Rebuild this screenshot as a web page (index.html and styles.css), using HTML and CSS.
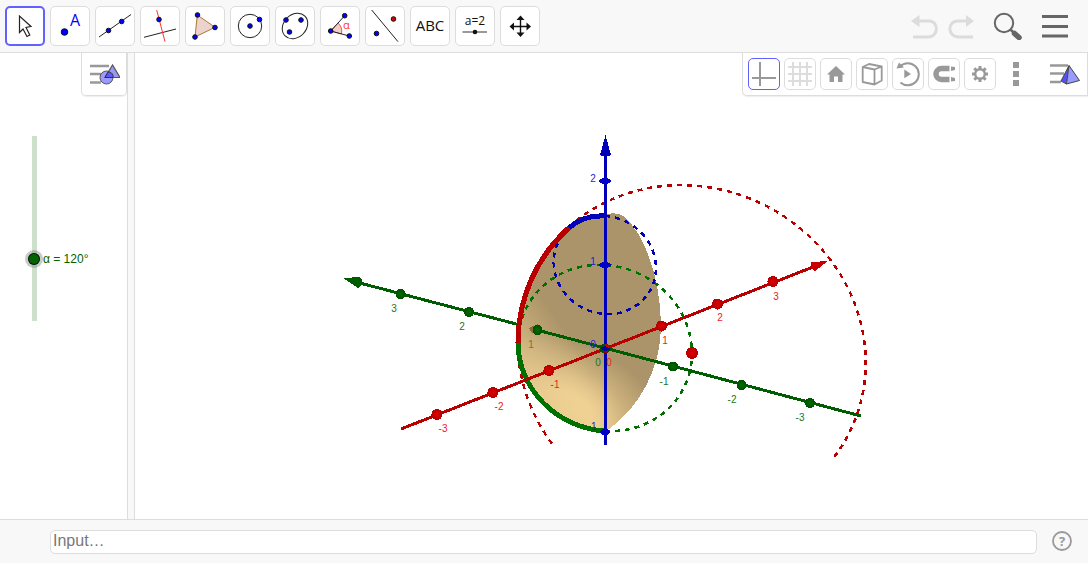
FILE: index.html
```html
<!DOCTYPE html>
<html lang="en">
<head>
    <meta charset="UTF-8">
    <meta name="viewport" content="width=device-width, initial-scale=1.0">
    <title>3D Calculator</title>
    <link rel="stylesheet" href="styles.css">
</head>
<body>
    <header class="topbar">
        <div class="tools">
            <button class="tool active" aria-label="Move">
                <svg viewBox="0 0 40 40"><path d="M14.500 10V26.500L18 23L22 30.500L24.800 29L21 21.500L26 20.500Z" fill="#fff" stroke="#222" stroke-width="1.200"/></svg>
            </button>
            <button class="tool" aria-label="Point">
                <svg viewBox="0 0 40 40"><circle class="pt" cx="14.500" cy="26" r="3.300"/><text class="pt-name" x="20" y="19.500">A</text></svg>
            </button>
            <button class="tool" aria-label="Line">
                <svg viewBox="0 0 40 40"><path class="ln" d="M4 31L36 8.500"/><circle class="pt" cx="13.500" cy="24.500" r="2.300"/><circle class="pt" cx="26.700" cy="15.500" r="2.300"/></svg>
            </button>
            <button class="tool" aria-label="Perpendicular line">
                <svg viewBox="0 0 40 40"><path class="ln" d="M4 31.300L36 23"/><path class="ln red" d="M16.700 4L25 35.700"/><circle class="pt" cx="19" cy="13.500" r="2.300"/></svg>
            </button>
            <button class="tool" aria-label="Polygon">
                <svg viewBox="0 0 40 40"><path d="M12.300 9L30 21.300L10 31Z" fill="#edd3cb" stroke="#a5793c"/><circle class="pt" cx="12.500" cy="9" r="2.300"/><circle class="pt" cx="30" cy="21.500" r="2.300"/><circle class="pt" cx="10" cy="31" r="2.300"/></svg>
            </button>
            <button class="tool" aria-label="Circle">
                <svg viewBox="0 0 40 40"><circle class="ln" cx="20" cy="20" r="11.700"/><circle class="pt" cx="20" cy="20" r="2.300"/><circle class="pt" cx="29.500" cy="13.500" r="2.300"/></svg>
            </button>
            <button class="tool" aria-label="Ellipse">
                <svg viewBox="0 0 40 40"><ellipse class="ln" cx="20" cy="20" rx="14" ry="11.300" transform="rotate(-45 20 20)"/><circle class="pt" cx="11" cy="14" r="2.300"/><circle class="pt" cx="26" cy="14" r="2.300"/><circle class="pt" cx="14.500" cy="26" r="2.300"/></svg>
            </button>
            <button class="tool" aria-label="Angle">
                <svg viewBox="0 0 40 40"><path d="M10.700 25L18 17A11 11 0 0 1 21.300 28Z" fill="#f4cfc8" stroke="#e55"/><path class="ln" d="M24.700 9.700L10.700 25L29.300 30"/><circle class="pt" cx="24.700" cy="9.700" r="2.300"/><circle class="pt" cx="10.700" cy="25" r="2.300"/><circle class="pt" cx="29.300" cy="30" r="2.300"/><text class="angle-name" x="23" y="23">α</text></svg>
            </button>
            <button class="tool" aria-label="Reflect">
                <svg viewBox="0 0 40 40"><path class="ln" d="M6.700 4L33 35.700"/><circle class="pt" cx="11.500" cy="27.500" r="2.300"/><circle class="pt pt-red" cx="28.500" cy="13" r="2.300"/></svg>
            </button>
            <button class="tool" aria-label="Text">
                <svg viewBox="0 0 40 40"><text class="tool-text" x="20" y="25">ABC</text></svg>
            </button>
            <button class="tool" aria-label="Slider">
                <svg viewBox="0 0 40 40"><text class="tool-text small" x="20" y="19">a=2</text><path d="M7.500 26H32" stroke="#555" stroke-width="1.200"/><circle cx="20" cy="26" r="2.300" fill="#111"/></svg>
            </button>
            <button class="tool" aria-label="Move view">
                <svg viewBox="0 0 40 40"><path d="M12 20.500H29M20.500 12V29" stroke="#111" stroke-width="1.400"/><path d="M9.500 20.500L14 16.500V24.500ZM31 20.500L26.500 16.500V24.500ZM20.500 9.500L16.500 14H24.500ZM20.500 31L16.500 26.500H24.500Z" fill="#111"/></svg>
            </button>
        </div>
        <div class="actions">
            <button class="icon-btn undo" aria-label="Undo">
                <svg width="28" height="28" viewBox="0 0 28 28" fill="none"><path d="M8 9H19C29 9 29 25 18 25H3" stroke="#dcdcdc" stroke-width="3"/><path d="M1 9L9.500 3V15Z" fill="#dcdcdc"/></svg>
            </button>
            <button class="icon-btn redo" aria-label="Redo">
                <svg width="28" height="28" viewBox="0 0 28 28" fill="none"><path d="M22 9H12C1 9 1 25 13 25H27" stroke="#dcdcdc" stroke-width="3"/><path d="M28 9L20 3V15Z" fill="#dcdcdc"/></svg>
            </button>
            <button class="icon-btn search" aria-label="Search">
                <svg width="29" height="28" viewBox="0 0 29 28" fill="none" stroke="#666"><circle cx="11" cy="11" r="9.200" stroke-width="2"/><path d="M17.500 17.500L21 21" stroke-width="2.500"/><path d="M21.500 21.500L26 25.500" stroke-width="5.500" stroke-linecap="round"/></svg>
            </button>
            <button class="icon-btn menu" aria-label="Menu">
                <svg width="28" height="28" viewBox="0 0 28 28"><path d="M1 4.500H27M1 14.500H27M1 24H27" stroke="#666" stroke-width="3"/></svg>
            </button>
        </div>
    </header>

    <main class="views">
        <section class="graphics">
            <button class="style-toggle" aria-label="Style bar">
                <svg width="32" height="24" viewBox="0 0 32 24"><path d="M2 4H21M2 12H13M2 20.500H13" stroke="#999" stroke-width="2.500"/><circle cx="18.500" cy="15.500" r="6.500" fill="#9a9aff" stroke="#555"/><path d="M24.500 3L17 15.500H32Z" fill="#8080f0" fill-opacity=".8" stroke="#555" stroke-width="1.200"/><path d="M17 15.500L20 10C24 10 25.500 13 25 15.500Z" fill="#5a5aff" stroke="#333"/></svg>
            </button>
            <div class="alpha">
                <input class="alpha-range" id="alpha" type="range" min="0" max="360" value="120">
                <label class="alpha-label" for="alpha">α = 120°</label>
            </div>
        </section>
        <div class="splitter"></div>
        <section class="graphics3d">
            <svg class="scene" viewBox="135 53 953 466">
                <defs>
                    <radialGradient id="shade" gradientUnits="userSpaceOnUse" cx="0" cy="0" r="1" gradientTransform="translate(562 414) rotate(24) scale(108 74)">
                        <stop offset="0" stop-color="#fddd9d"/>
                        <stop offset=".3" stop-color="#f6d798"/>
                        <stop offset=".65" stop-color="#cbb07c"/>
                        <stop offset="1" stop-color="#ab9469"/>
                    </radialGradient>
                    <linearGradient id="rim" gradientUnits="userSpaceOnUse" x1="519" y1="355" x2="562" y2="325">
                        <stop offset="0" stop-color="#e4c78d" stop-opacity=".7"/>
                        <stop offset="1" stop-color="#e4c78d" stop-opacity="0"/>
                    </linearGradient>
                    <radialGradient id="tick-red"><stop offset="0" stop-color="#e00000"/><stop offset="1" stop-color="#b40000"/></radialGradient>
                    <radialGradient id="tick-green"><stop offset="0" stop-color="#006c00"/><stop offset="1" stop-color="#005000"/></radialGradient>
                </defs>

                <!-- far part of the y axis and the red circle -->
                <path class="axis y" d="M356 282L520 325"/>
                <path class="dash x" transform="translate(692 353) skewY(3.4)" d="M-140 99A174 167 0 1 1 141 97"/>

                <!-- surface -->
                <path d="M605 432C558 432 519 395 519 343C519 300 538 260 569 227C580 217 592 215 605 215C612 212 619 213 625 217C649 240 661 288 661 326C661 366 641 408 605 432Z" fill="url(#shade)"/>
                <path d="M605 432C558 432 519 395 519 343C519 300 538 260 569 227L605 215Z" fill="url(#rim)"/>

                <!-- circles -->
                <g transform="translate(605 348) skewY(3.4)">
                    <path class="dash g" d="M0 83A87 83 0 0 0 0 -83A87 83 0 0 0 -87 0"/>
                    <path class="arc g" d="M-87 0A87 83 0 0 0 0 83"/>
                </g>
                <g transform="translate(605 265) skewY(3.4)">
                    <path class="dash z" d="M0 -49A51 49 0 0 1 0 49A51 49 0 0 1 -36 -35"/>
                    <path class="arc z" d="M0 -49A51 49 0 0 0 -36 -35"/>
                </g>
                <path class="arc x" transform="translate(692 353) skewY(3.4)" d="M-174 0A174 167 0 0 1 -123 -118"/>

                <!-- axes -->
                <path d="M529 328L538 324V335L532 333Z" fill="#8b6a37"/>
                <path class="axis y" d="M537 330L861 416"/>
                <path class="axis x" d="M401 429L818 265"/>
                <path class="axis z" d="M605.500 154V445"/>
                <path d="M605.500 135L611 155Q605.500 158 600 155Z" fill="#0000b8"/>
                <path d="M828 261L811 262Q809 267 815 271Z" fill="#c80000"/>
                <path d="M343 278L360 277Q366 282 358 288Z" fill="#005c00"/>

                <g fill="url(#tick-green)">
                    <circle cx="400.500" cy="294" r="5"/><circle cx="469" cy="312" r="5"/><circle cx="537.500" cy="330" r="5"/>
                    <circle cx="673" cy="366.500" r="5"/><circle cx="741.500" cy="385" r="5"/><circle cx="810" cy="403" r="5"/>
                </g>
                <g fill="url(#tick-red)">
                    <circle cx="437" cy="414.500" r="5.500"/><circle cx="493" cy="392.500" r="5.500"/><circle cx="549" cy="370.500" r="5.500"/>
                    <circle cx="661.500" cy="326" r="5.500"/><circle cx="717.500" cy="304" r="5.500"/><circle cx="773" cy="281.500" r="5.500"/>
                    <circle cx="692" cy="353" r="6"/>
                </g>
                <g fill="#0000c8">
                    <ellipse cx="605" cy="181" rx="6" ry="3"/><ellipse cx="605" cy="265" rx="6" ry="3"/><ellipse cx="605" cy="432" rx="5" ry="3"/>
                </g>
                <circle cx="605" cy="348.500" r="5" fill="#005000"/>
                <path d="M605 344A5 5 0 0 1 610 348H606Z" fill="#c80000"/>
                <path d="M601 351L605 353.500L609 351Z" fill="#a00000"/>
                <path d="M600 348L605 346L611 349L605 351Z" fill="#0000a8"/>

                <g class="nums x">
                    <text x="443" y="432">-3</text><text x="499" y="410">-2</text><text x="555" y="388">-1</text><text x="609" y="366">0</text>
                    <text x="665" y="344">1</text><text x="720" y="321">2</text><text x="776" y="300">3</text>
                </g>
                <g class="nums y">
                    <text x="394" y="312">3</text><text x="462" y="330">2</text><text class="behind" x="531" y="348">1</text><text x="598" y="366">0</text>
                    <text x="664" y="385">-1</text><text x="732" y="403">-2</text><text x="800" y="421">-3</text>
                </g>
                <g class="nums z">
                    <text x="593" y="182">2</text><text x="593" y="265">1</text><text x="593" y="348">0</text><text x="592" y="430">-1</text>
                </g>
            </svg>

            <div class="stylebar">
                <button class="opt active" aria-label="Axes">
                    <svg viewBox="0 0 32 32"><path d="M12 4V28M4 20H28" stroke="#999" stroke-width="2"/></svg>
                </button>
                <button class="opt" aria-label="Grid">
                    <svg viewBox="0 0 32 32"><path d="M9 4V28M16 4V28M23 4V28M4 9H28M4 16H28M4 23H28" stroke="#ddd" stroke-width="2"/></svg>
                </button>
                <button class="opt" aria-label="Home">
                    <svg viewBox="0 0 32 32"><path d="M16 8L25 16.500H22.500V24H18V18.500H14V24H9.500V16.500H7Z" fill="#999"/></svg>
                </button>
                <button class="opt" aria-label="Projection">
                    <svg viewBox="0 0 32 32" fill="none" stroke="#999" stroke-width="1.800" stroke-linejoin="round"><path d="M6.700 9L13 6L25.700 8.500V22.500L18.500 26.500L6.700 24ZM6.700 9L18.500 11.500L25.700 8.500M18.500 11.500V26.500"/></svg>
                </button>
                <button class="opt" aria-label="Rotate view">
                    <svg viewBox="0 0 32 32"><path d="M8 8.500A11 11 0 1 1 8.500 24.500" fill="none" stroke="#999" stroke-width="2"/><path d="M4.500 10.500L7 4.500L12 9.500ZM12.300 11.500L19 16L12.300 20.300Z" fill="#999"/></svg>
                </button>
                <button class="opt" aria-label="Snap to grid">
                    <svg viewBox="0 0 32 32"><path d="M21.500 10.500H13.500A5.500 5.500 0 0 0 13.500 21.500H21.500" fill="none" stroke="#999" stroke-width="5.500"/><path d="M23 8.500L27 9V12L23 13ZM23 19L27 20V23L23 23.500Z" fill="#999"/></svg>
                </button>
                <button class="opt" aria-label="Settings">
                    <svg viewBox="0 0 32 32" fill="none" stroke="#999"><circle cx="16" cy="16" r="4.800" stroke-width="2.400"/><path d="M16 8V11M16 21V24M8 16H11M21 16H24M10.300 10.300L12.500 12.500M19.500 19.500L21.700 21.700M21.700 10.300L19.500 12.500M12.500 19.500L10.300 21.700" stroke-width="3"/></svg>
                </button>
                <button class="icon-btn more" aria-label="More">
                    <svg width="32" height="32" viewBox="0 0 32 32"><path d="M13 4H19V10H13ZM13 13H19V19H13ZM13 22H19V28H13Z" fill="#999"/></svg>
                </button>
                <button class="icon-btn style3d" aria-label="Style bar">
                    <svg width="32" height="24" viewBox="0 0 32 24"><path d="M1 3.500H19M1 11.500H15M1 20H12" stroke="#999" stroke-width="2.500"/><path d="M20 3.500L12 19L17.500 22Z" fill="#5353f5"/><path d="M20 3.500L17.500 22L30.500 18.500Z" fill="#9a9aff"/><path d="M20 3.500L12 19L17.500 22L30.500 18.500ZM20 3.500L17.500 22" fill="none" stroke="#444"/></svg>
                </button>
            </div>
        </section>
    </main>

    <footer class="inputbar">
        <input class="entry" type="text" placeholder="Input…" aria-label="Input">
        <button class="icon-btn help" aria-label="Help">
            <svg width="22" height="22" viewBox="0 0 22 22"><circle cx="11" cy="10" r="9" fill="none" stroke="#999" stroke-width="1.800"/><text class="help-mark" x="11" y="15">?</text></svg>
        </button>
    </footer>
</body>
</html>
```

FILE: styles.css
```css
*{
    box-sizing: border-box;
}
body{
    display: flex;
    flex-direction: column;
    height: 100vh;
    margin: 0;
    padding: 0 1px 1px 0;
    background-color: #fff;
    font-family: "Liberation Sans", Arial, sans-serif;
}
button{
    margin: 0;
    padding: 0;
    border: none;
    background: none;
    cursor: pointer;
}
svg{
    display: block;
}

/* top toolbar */
.topbar{
    display: flex;
    justify-content: space-between;
    align-items: center;
    flex: none;
    height: 53px;
    padding: 0 19px 0 5px;
    background-color: #f8f8f8;
    border-bottom: 1px solid #ddd;
}
.tools{
    display: flex;
    gap: 5px;
}
.tool{
    display: flex;
    align-items: center;
    justify-content: center;
    width: 40px;
    height: 40px;
    background-color: #fff;
    border: 1px solid #ddd;
    border-radius: 5px;
}
.tool.active{
    border: 2px solid #6161ff;
}
.tool svg{
    flex: none;
    width: 40px;
    height: 40px;
}
.pt{
    fill: #00f;
    stroke: #111;
}
.pt-red{
    fill: #e00000;
}
.ln{
    fill: none;
    stroke: #222;
    stroke-width: 1;
}
.ln.red{
    stroke: #f33;
}
.pt-name{
    font: 16px "Open Sans", sans-serif;
    fill: #00f;
}
.angle-name{
    font: 11px "Open Sans", sans-serif;
    fill: #f33;
}
.tool-text{
    font: 15px "Open Sans", sans-serif;
    fill: #111;
    text-anchor: middle;
}
.tool-text.small{
    font-size: 12px;
}
.actions{
    display: flex;
    align-items: center;
}
.redo{
    margin-left: 8px;
}
.search, .menu{
    margin-left: 19px;
}

/* views */
.views{
    display: flex;
    flex: 1;
    min-height: 0;
}
.graphics{
    flex: none;
    width: 127px;
}
.style-toggle{
    display: flex;
    align-items: center;
    justify-content: center;
    width: 46px;
    height: 43px;
    margin-left: auto;
    border: 1px solid #ddd;
    border-width: 0 1px 1px 1px;
    border-radius: 0 0 5px 5px;
    box-shadow: 0 1px 1px #eee;
}
.alpha{
    display: flex;
    align-items: center;
    padding: 32px 0 0 25px;
}
.alpha-range{
    appearance: none;
    writing-mode: vertical-lr;
    direction: rtl;
    width: 18px;
    height: 201px;
    margin: 0;
    background: linear-gradient(#cce0cc, #cce0cc) center / 5px 185px no-repeat;
}
.alpha-range::-webkit-slider-thumb{
    appearance: none;
    width: 18px;
    height: 18px;
    background-color: #006400;
    background-clip: padding-box;
    border: 3px solid rgba(120, 120, 120, 0.4);
    border-radius: 50%;
    box-shadow: inset 0 0 0 1px #111;
}
.alpha-label{
    padding-top: 60px;
    font-size: 12px;
    line-height: 1;
    color: #006400;
}
.splitter{
    flex: none;
    width: 8px;
    background-color: #f8f8f8;
    border: 1px solid #ddd;
    border-width: 0 1px;
    cursor: col-resize;
}
.graphics3d{
    position: relative;
    flex: 1;
    min-width: 0;
}
.scene{
    width: 100%;
    height: 100%;
    shape-rendering: crispEdges;
}
.axis{
    fill: none;
    stroke-width: 3;
}
.dash{
    fill: none;
    stroke-width: 2.5;
    stroke-dasharray: 5 5;
}
.arc{
    fill: none;
    stroke-width: 5;
}
.axis.x, .dash.x, .arc.x{
    stroke: #b80000;
}
.axis.y{
    stroke: #005c00;
}
.dash.g, .arc.g{
    stroke: #007000;
}
.axis.z, .dash.z, .arc.z{
    stroke: #0000b8;
}
.nums{
    font-size: 10px;
    text-anchor: middle;
}
.nums.x{
    fill: #f01818;
}
.nums.y{
    fill: #1c741c;
}
.nums.z{
    fill: #1c1cd8;
}
.nums .behind{
    fill: #8b6a37;
}

/* style bar over the 3D view */
.stylebar{
    position: absolute;
    top: 0;
    right: 0;
    display: flex;
    align-items: center;
    gap: 4px;
    height: 43px;
    padding: 0 6px 0 5px;
    background-color: #fff;
    border: 1px solid #ddd;
    border-width: 0 1px 1px 1px;
    border-radius: 0 0 0 5px;
    box-shadow: 0 1px 1px #eee;
}
.opt{
    display: flex;
    align-items: center;
    justify-content: center;
    width: 32px;
    height: 32px;
    border: 1px solid #ddd;
    border-radius: 5px;
}
.opt.active{
    border-color: #6161ff;
}
.opt svg{
    flex: none;
    width: 32px;
    height: 32px;
}
.style3d{
    margin-left: 13px;
}

/* input bar */
.inputbar{
    display: flex;
    align-items: center;
    flex: none;
    gap: 14px;
    height: 44px;
    padding: 0 15px 0 50px;
    background-color: #f8f8f8;
    border-top: 1px solid #ddd;
}
.entry{
    flex: 1;
    min-width: 0;
    height: 24px;
    padding: 0 2px 2px;
    font-family: inherit;
    font-size: 16px;
    color: #333;
    background-color: #fff;
    border: 1px solid #ddd;
    border-radius: 5px;
    outline: none;
}
.entry::placeholder{
    color: #777;
}
.help-mark{
    font: bold 13px "Open Sans", sans-serif;
    fill: #999;
    text-anchor: middle;
}
```
